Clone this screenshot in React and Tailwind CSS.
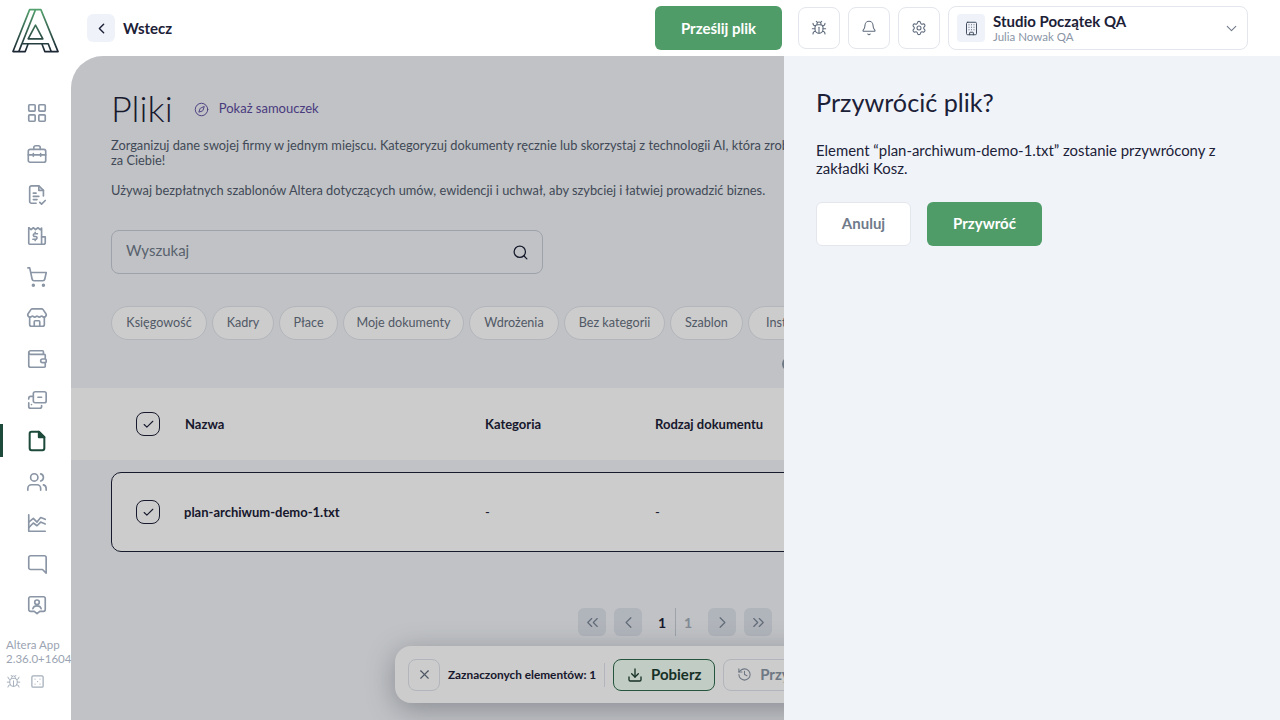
import React from "react";
import {
  ChevronLeft, ChevronDown, ChevronRight, ChevronsLeft, ChevronsRight, Bug, Bell, Settings, Building, Compass, Search, Check, X, Download, History,
  LayoutGrid, ShoppingCart, Store, Wallet, Users, Dice5,
} from "lucide-react";

const Logo = () => (
  <svg width="47" height="46" viewBox="0 0 48 46" fill="none" className="ml-3 mt-2">
    <defs>
      <linearGradient id="lg" gradientUnits="userSpaceOnUse" x1="0" y1="0" x2="0" y2="45">
        <stop offset="0" stopColor="#55a36f" />
        <stop offset="1" stopColor="#1a2433" />
      </linearGradient>
    </defs>
    <g stroke="url(#lg)" strokeWidth="1.7" strokeLinejoin="round">
      <path d="M1 44 L18 1.2 H29.5 L47 44 H33.5 L30.5 36 H16.5 L13.5 44 Z" />
      <path d="M24 1.2 L7 44 M7 44 L10 36 H16.5 M40 44 L37 36 H30.5" />
      <path d="M24 17 L31.5 31 H16.5 Z" />
    </g>
  </svg>
);

// nav icons that lucide has no match for
const Ico = ({ size = 22, strokeWidth = 1.8, className, children }) => (
  <svg width={size} height={size} viewBox="0 0 24 24" fill="none" stroke="currentColor" strokeWidth={strokeWidth} strokeLinecap="round" strokeLinejoin="round" className={className}>
    {children}
  </svg>
);

const CaseIcon = (p) => (
  <Ico {...p}>
    <rect x="2.5" y="7" width="19" height="14" rx="2" />
    <path d="M8.5 7V5a2 2 0 0 1 2-2h3a2 2 0 0 1 2 2v2" />
    <path d="M2.5 13h19M8 11.5v3M16 11.5v3" />
  </Ico>
);

const ReportIcon = (p) => (
  <Ico {...p}>
    <path d="M11 21H6a2 2 0 0 1-2-2V4a2 2 0 0 1 2-2h8l5 5v6" />
    <path d="M14 2v5h5" />
    <path d="M8 10h3M8 13.5h6M8 17h4" />
    <path d="m15 20 2 2 4-4" />
  </Ico>
);

const InvoiceIcon = (p) => (
  <Ico {...p}>
    <path d="M3 3v17a1 1 0 0 0 1 1h15a2 2 0 0 0 2-2v-6h-4" />
    <path d="M3 3l2.5 2L8 3l2.5 2L13 3l2.5 2L17 3.5V21" />
    <path d="M12.5 9.5h-3a1.5 1.5 0 0 0 0 3h1a1.5 1.5 0 0 1 0 3h-3M10 8v1.5M10 15.5V17" />
  </Ico>
);

const CardsIcon = (p) => (
  <Ico {...p}>
    <rect x="8" y="3" width="14" height="12" rx="2" />
    <path d="M13 9h4" />
    <path d="M8 8H5a2 2 0 0 0-2 2v1M3 15v4a2 2 0 0 0 2 2h10a2 2 0 0 0 2-2v-1" />
    <path d="M6 17h.01" />
  </Ico>
);

const FileIcon = (p) => (
  <Ico {...p}>
    <path d="M14 2H6a2 2 0 0 0-2 2v16a2 2 0 0 0 2 2h12a2 2 0 0 0 2-2V8Z" />
    <path d="M14 2v6h6Z" fill="currentColor" />
  </Ico>
);

const TrendIcon = (p) => (
  <Ico {...p}>
    <path d="M3 3v18h18" />
    <path d="m3 11 5-4 4 4 4-5 5 2" />
    <path d="m3 17 5-5 4 3 4-4 5 2" />
  </Ico>
);

const ChatIcon = (p) => (
  <Ico {...p}>
    <path d="M5 3h15a2 2 0 0 1 2 2v17l-4-4H5a2 2 0 0 1-2-2V5a2 2 0 0 1 2-2Z" />
  </Ico>
);

const ContactIcon = (p) => (
  <Ico {...p}>
    <path d="M5 3h14a2 2 0 0 1 2 2v12a2 2 0 0 1-2 2h-4l-3 2.5L9 19H5a2 2 0 0 1-2-2V5a2 2 0 0 1 2-2Z" />
    <circle cx="12" cy="9" r="2.5" />
    <path d="M7.5 16c.5-2 2.2-3 4.5-3s4 1 4.5 3" />
  </Ico>
);

const navIcons = [LayoutGrid, CaseIcon, ReportIcon, InvoiceIcon, ShoppingCart, Store, Wallet, CardsIcon, FileIcon, Users, TrendIcon, ChatIcon, ContactIcon];

const chips = [
  ["Księgowość", 96], ["Kadry", 62], ["Płace", 59], ["Moje dokumenty", 121], ["Wdrożenia", 90],
  ["Bez kategorii", 101], ["Szablon", 73], ["Instrukcje", 90],
];

const Sidebar = () => (
  <aside className="w-[71px] shrink-0 flex flex-col pt-[36px] text-[#8a95a5] overflow-hidden">
    {navIcons.map((Icon, i) => (
      <div key={i} className="relative h-[41px] shrink-0 flex items-center justify-center">
        {Icon === FileIcon && <span className="absolute left-0 top-1 w-[3px] h-[33px] bg-[#1d4a3a]" />}
        <Icon size={22} strokeWidth={Icon === FileIcon ? 2.2 : 1.8} className={Icon === FileIcon ? "text-[#1d4a3a] ml-[3px]" : "ml-[3px]"} />
      </div>
    ))}
    <div className="mt-[13px] pl-[6px] text-[11.5px] leading-[14px] text-[#9aa4b2] whitespace-nowrap">
      <div>Altera App</div>
      <div>2.36.0+1604</div>
    </div>
    <div className="flex items-center gap-[9px] pl-[6px] mt-[8px] text-[#a3adba]">
      <Bug size={15} strokeWidth={1.5} />
      <Dice5 size={15} strokeWidth={2} />
    </div>
  </aside>
);

const Header = () => (
  <header className="h-[56px] shrink-0 flex items-center">
    <div className="w-[87px] shrink-0 self-start"><Logo /></div>
    <button className="w-[28px] h-[28px] rounded-md bg-[#eff3f9] flex items-center justify-center text-[#1c2137]">
      <ChevronLeft size={17} strokeWidth={2} />
    </button>
    <span className="ml-2 text-[15px] font-bold text-[#1c2137]">Wstecz</span>
    <button className="ml-auto w-[127px] h-[44px] rounded-md bg-[#4f9c68] text-white text-[15px] font-bold">Prześlij plik</button>
    <div className="ml-4 flex gap-2">
      {[Bug, Bell, Settings].map((Icon, i) => (
        <button key={i} className="w-[42px] h-[42px] rounded-lg border border-[#e3e6ec] flex items-center justify-center text-[#5f6b7c]">
          <Icon size={16} strokeWidth={1.6} />
        </button>
      ))}
    </div>
    <div className="ml-2 mr-8 w-[300px] h-[44px] rounded-lg border border-[#e3e6ec] flex items-center pl-2 pr-[7px]">
      <span className="w-[28px] h-[28px] rounded bg-[#eff3f9] flex items-center justify-center text-[#3b4456]">
        <Building size={15} strokeWidth={1.5} />
      </span>
      <div className="ml-2 flex-1 min-w-0">
        <div className="text-[15px] leading-[17px] font-bold text-[#1c2137]">Studio Początek QA</div>
        <div className="text-[11.5px] leading-[14px] text-[#8a95a5]">Julia Nowak QA</div>
      </div>
      <ChevronDown size={17} strokeWidth={1.5} className="text-[#6f7a8a]" />
    </div>
  </header>
);

const PageButton = ({ icon: Icon }) => (
  <span className="w-[28px] h-[28px] rounded-md bg-[#dde2ea] flex items-center justify-center text-[#7b8797]">
    <Icon size={19} strokeWidth={1.5} />
  </span>
);

const Box = () => (
  <span className="w-[24px] h-[24px] rounded-lg border border-[#1c2137] flex items-center justify-center text-[#1c2137]">
    <Check size={13} strokeWidth={2} />
  </span>
);

const Content = () => (
  <div className="w-full">
    <div className="pl-10 pt-[33px]">
      <div className="flex items-center h-[40px]">
        <h1 className="text-[36px] font-light -mt-[2px] text-[#1c2137]">Pliki</h1>
        <Compass size={15} strokeWidth={1.5} className="ml-[21px] text-[#5b4a9e]" />
        <span className="ml-[10px] text-[13px] text-[#5b4a9e]">Pokaż samouczek</span>
      </div>
      <p className="mt-[9px] text-[12.8px] leading-[15px] text-[#525b6d] whitespace-nowrap">
        Zorganizuj dane swojej firmy w jednym miejscu. Kategoryzuj dokumenty ręcznie lub skorzystaj z technologii AI, która zrobi to<br />za Ciebie!
      </p>
      <p className="mt-[15px] text-[12.8px] leading-[15px] text-[#525b6d] whitespace-nowrap">
        Używaj bezpłatnych szablonów Altera dotyczących umów, ewidencji i uchwał, aby szybciej i łatwiej prowadzić biznes.
      </p>
      <div className="mt-[32px] w-[432px] h-[44px] rounded-lg border border-[#c5cbd6] flex items-center justify-between pl-[14px] pr-[13px]">
        <span className="text-[15px] leading-[18px] -mt-[4px] text-[#6f7a8a]">Wyszukaj</span>
        <Search size={17} strokeWidth={1.8} className="text-[#1c2137]" />
      </div>
      <div className="mt-[32px] flex gap-[5px] whitespace-nowrap">
        {chips.map(([c, w]) => (
          <span key={c} style={{ width: w }} className="h-[34px] shrink-0 rounded-full border border-[#dfe3ea] bg-white flex items-center justify-center text-[12.6px] text-[#66707f]">{c}</span>
        ))}
      </div>
      <div className="h-[48px] flex items-center pl-[671px]">
        <span className="w-[14px] h-[14px] rounded-full border-2 border-[#8a95a5]" />
      </div>
    </div>
    <div className="h-[72px] bg-white flex items-center pl-[65px] text-[13px] font-bold text-[#1c2137]">
      <Box />
      <span className="ml-[25px] w-[300px] pt-[1px]">Nazwa</span>
      <span className="w-[170px] pt-[1px]">Kategoria</span>
      <span className="pt-[1px]">Rodzaj dokumentu</span>
    </div>
    <div className="mt-[12px] ml-10 h-[80px] bg-white border border-[#1c2137] rounded-[10px] flex items-center pl-[24px] text-[13px] text-[#1c2137]">
      <Box />
      <span className="ml-[24px] w-[301px] font-bold pt-[1px]">plan-archiwum-demo-1.txt</span>
      <span className="w-[170px] pt-[1px]">-</span>
      <span className="pt-[1px]">-</span>
    </div>
    <div className="mt-[56px] pr-[1px] flex items-center justify-center">
      <PageButton icon={ChevronsLeft} />
      <span className="ml-2"><PageButton icon={ChevronLeft} /></span>
      <span className="w-[33px] pl-[7px] text-center text-[14px] font-bold text-[#1c2137]">1</span>
      <span className="h-[28px] w-px bg-[#c5cbd6]" />
      <span className="w-[24px] text-center text-[14px] font-bold text-[#a3adba]">1</span>
      <span className="ml-[8px]"><PageButton icon={ChevronRight} /></span>
      <span className="ml-2"><PageButton icon={ChevronsRight} /></span>
    </div>
  </div>
);

const Toolbar = () => (
  <div className="absolute bottom-[17px] left-[324px] w-[562px] h-[57px] rounded-2xl bg-white shadow-[0_6px_28px_rgba(40,50,70,0.35)] flex items-center pl-[13px] whitespace-nowrap">
    <span className="w-[32px] h-[32px] rounded-lg border border-[#dfe3ea] flex items-center justify-center text-[#5f6b7c]">
      <X size={15} strokeWidth={1.8} />
    </span>
    <span className="ml-2 text-[11.8px] font-bold text-[#1c2137]">Zaznaczonych elementów: 1</span>
    <span className="ml-2 h-[24px] w-px bg-[#dfe3ea]" />
    <span className="ml-2 w-[102px] h-[32px] rounded-lg border border-[#2f6b4c] bg-[#f0fff6] flex items-center justify-center gap-2 text-[15px] font-bold text-[#1d3d30]">
      <Download size={16} strokeWidth={2} />Pobierz
    </span>
    <span className="ml-2 w-[110px] h-[32px] rounded-lg border border-[#dfe3ea] flex items-center pl-[13px] gap-2 text-[15px] font-bold text-[#8a95a5]">
      <History size={15} strokeWidth={1.7} />Przywróć
    </span>
  </div>
);

const Drawer = () => (
  <div className="absolute top-0 right-0 bottom-0 w-[496px] bg-[#f0f4f9] pl-8 pr-8 pt-[30px]">
    <h2 className="text-[25.2px] leading-[32px] text-[#1c2137]">Przywrócić plik?</h2>
    <p className="mt-[23px] text-[14.9px] leading-[18px] text-[#1c2137]">
      Element “plan-archiwum-demo-1.txt” zostanie przywrócony z zakładki Kosz.
    </p>
    <div className="mt-[25px] flex gap-4">
      <button className="w-[95px] h-[44px] pb-[2px] rounded-md bg-white border border-[#e3e6ec] text-[15px] font-bold text-[#6f7a8a]">Anuluj</button>
      <button className="w-[115px] h-[44px] pb-[2px] rounded-md bg-[#4f9c68] text-[15px] font-bold text-white">Przywróć</button>
    </div>
  </div>
);

export default function App() {
  return (
    <div className="h-screen flex flex-col overflow-hidden bg-white [font-family:Lato,sans-serif]">
      <Header />
      <div className="flex-1 flex min-h-0">
        <Sidebar />
        <main className="relative flex-1 min-w-0 overflow-hidden rounded-tl-[32px] bg-[#f1f3f7]">
          <Content />
          <Toolbar />
          <div className="absolute inset-0 bg-black/20" />
          <Drawer />
        </main>
      </div>
    </div>
  );
}
